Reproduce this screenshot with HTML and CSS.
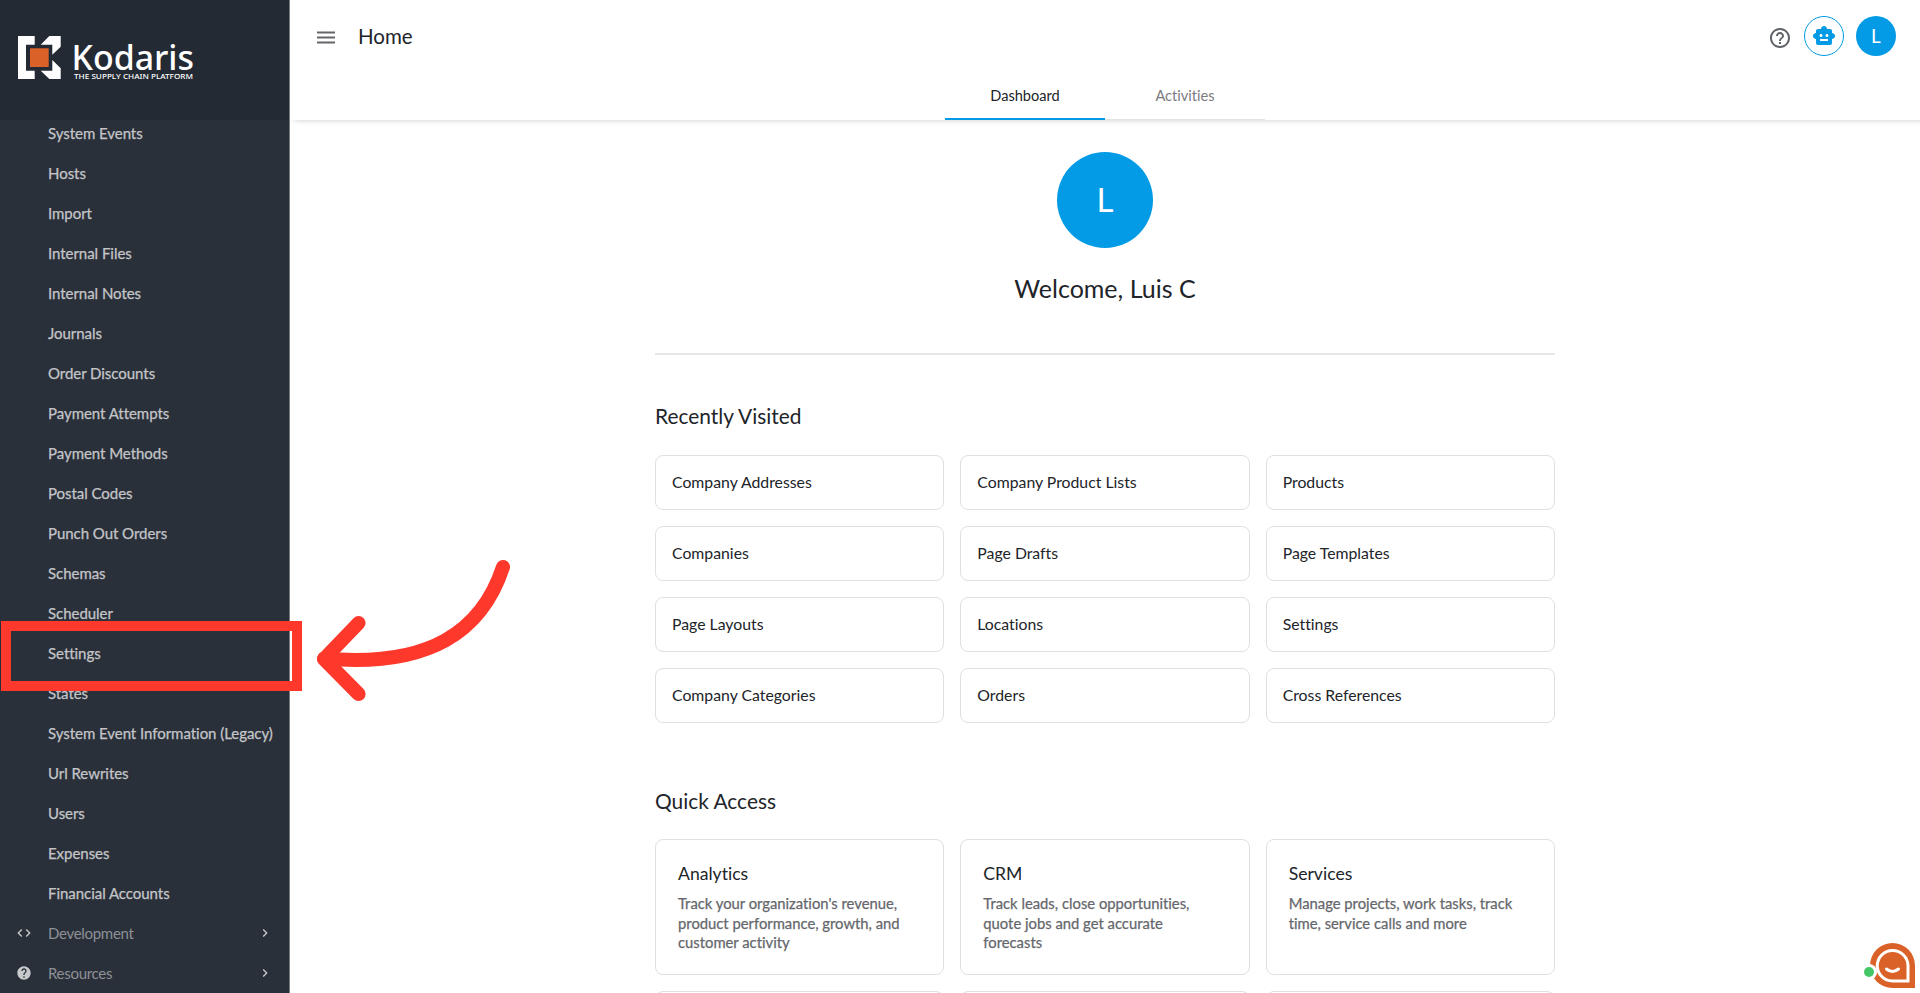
FILE: index.html
```
<!DOCTYPE html>
<html lang="en">
<head>
    <meta charset="UTF-8">
    <meta name="viewport" content="width=device-width, initial-scale=1.0">
    <title>Kodaris - Home</title>
    <link rel="stylesheet" href="styles.css">
</head>
<body>
    <div class="app">
        <!-- Sidebar -->
        <aside class="sidebar">
            <div class="sidebar-header">
                <svg class="logo" width="184" height="56" viewBox="0 0 184 56">
                    <path fill="#fff" d="M3 6h16.700v8.700H11v26h8.700V49H3z"/>
                    <path fill="#fff" d="M34.300 6h11.400v10.700l-8.400 8v-10H25.700zM25.700 40.700h11.600V30l8.400 8.300V49H34.300z"/>
                    <rect x="15" y="18.300" width="18.700" height="18.700" fill="#da6228"/>
                    <text class="logo-name" x="56.500" y="40" textLength="122.500" lengthAdjust="spacingAndGlyphs">Kodaris</text>
                    <text class="logo-tagline" x="59" y="48.500" textLength="119" lengthAdjust="spacingAndGlyphs">THE SUPPLY CHAIN PLATFORM</text>
                </svg>
            </div>
            <nav class="sidebar-nav">
                <a class="nav-item">System Events</a>
                <a class="nav-item">Hosts</a>
                <a class="nav-item">Import</a>
                <a class="nav-item">Internal Files</a>
                <a class="nav-item">Internal Notes</a>
                <a class="nav-item">Journals</a>
                <a class="nav-item">Order Discounts</a>
                <a class="nav-item">Payment Attempts</a>
                <a class="nav-item">Payment Methods</a>
                <a class="nav-item">Postal Codes</a>
                <a class="nav-item">Punch Out Orders</a>
                <a class="nav-item">Schemas</a>
                <a class="nav-item">Scheduler</a>
                <a class="nav-item">Settings</a>
                <a class="nav-item">States</a>
                <a class="nav-item">System Event Information (Legacy)</a>
                <a class="nav-item">Url Rewrites</a>
                <a class="nav-item">Users</a>
                <a class="nav-item">Expenses</a>
                <a class="nav-item">Financial Accounts</a>
                <a class="nav-item nav-group">
                    <svg class="nav-icon" viewBox="0 0 24 24"><path d="M9.4 16.6L4.8 12l4.6-4.6L8 6l-6 6 6 6 1.4-1.4zm5.2 0l4.6-4.6-4.6-4.6L16 6l6 6-6 6-1.4-1.4z"/></svg>
                    Development
                    <svg class="nav-arrow" viewBox="0 0 24 24"><path d="M10 6L8.59 7.41 13.17 12l-4.58 4.59L10 18l6-6z"/></svg>
                </a>
                <a class="nav-item nav-group">
                    <svg class="nav-icon" viewBox="0 0 24 24"><path d="M12 2C6.48 2 2 6.48 2 12s4.48 10 10 10 10-4.48 10-10S17.52 2 12 2zm1 17h-2v-2h2v2zm2.07-7.75l-.9.92C13.45 12.9 13 13.5 13 15h-2v-.5c0-1.1.45-2.1 1.17-2.83l1.24-1.26c.37-.36.59-.86.59-1.41 0-1.1-.9-2-2-2s-2 .9-2 2H8c0-2.21 1.79-4 4-4s4 1.79 4 4c0 .88-.36 1.68-.93 2.25z"/></svg>
                    Resources
                    <svg class="nav-arrow" viewBox="0 0 24 24"><path d="M10 6L8.59 7.41 13.17 12l-4.58 4.59L10 18l6-6z"/></svg>
                </a>
            </nav>
        </aside>

        <!-- Main area -->
        <div class="main">
            <header class="topbar">
                <div class="toolbar">
                    <svg class="menu-icon" width="18" height="13" viewBox="0 0 18 13"><path d="M0 .5h18v2H0zM0 5.500h18v2H0zM0 10.500h18v2H0z"/></svg>
                    <h1 class="page-title">Home</h1>
                    <div class="toolbar-actions">
                        <svg class="help-icon" viewBox="0 0 24 24"><path d="M11 18h2v-2h-2v2zm1-16C6.48 2 2 6.48 2 12s4.48 10 10 10 10-4.48 10-10S17.52 2 12 2zm0 18c-4.41 0-8-3.59-8-8s3.59-8 8-8 8 3.59 8 8-3.59 8-8 8zm0-14c-2.21 0-4 1.79-4 4h2c0-1.1.9-2 2-2s2 .9 2 2c0 2-3 1.75-3 5h2c0-2.25 3-2.5 3-5 0-2.21-1.79-4-4-4z"/></svg>
                        <div class="bot-btn">
                            <svg width="24" height="24" viewBox="0 0 24 24"><path fill-rule="evenodd" d="M20 9V7c0-1.100-.9-2-2-2h-3c0-1.660-1.340-3-3-3S9 3.340 9 5H6c-1.100 0-2 .9-2 2v2c-1.660 0-3 1.340-3 3s1.340 3 3 3v4c0 1.100.9 2 2 2h12c1.100 0 2-.9 2-2v-4c1.660 0 3-1.340 3-3s-1.340-3-3-3zM7.500 11.500c0-.83.67-1.500 1.500-1.500s1.500.67 1.500 1.500S9.830 13 9 13s-1.500-.67-1.500-1.500zM16 17H8v-2h8v2zm-1-4c-.83 0-1.500-.67-1.500-1.500S14.170 10 15 10s1.500.67 1.500 1.500S15.830 13 15 13z"/></svg>
                        </div>
                        <div class="avatar">L</div>
                    </div>
                </div>
                <div class="tabs">
                    <a class="tab active">Dashboard</a>
                    <a class="tab">Activities</a>
                </div>
            </header>

            <main class="content">
                <div class="welcome">
                    <div class="avatar avatar-large">L</div>
                    <h2 class="welcome-text">Welcome, Luis C</h2>
                </div>

                <h3 class="section-title">Recently Visited</h3>
                <div class="card-grid">
                    <a class="link-card">Company Addresses</a>
                    <a class="link-card">Company Product Lists</a>
                    <a class="link-card">Products</a>
                    <a class="link-card">Companies</a>
                    <a class="link-card">Page Drafts</a>
                    <a class="link-card">Page Templates</a>
                    <a class="link-card">Page Layouts</a>
                    <a class="link-card">Locations</a>
                    <a class="link-card">Settings</a>
                    <a class="link-card">Company Categories</a>
                    <a class="link-card">Orders</a>
                    <a class="link-card">Cross References</a>
                </div>

                <h3 class="section-title quick-title">Quick Access</h3>
                <div class="card-grid">
                    <a class="info-card">
                        <h4>Analytics</h4>
                        <p>Track your organization's revenue,<br>product performance, growth, and<br>customer activity</p>
                    </a>
                    <a class="info-card">
                        <h4>CRM</h4>
                        <p>Track leads, close opportunities,<br>quote jobs and get accurate<br>forecasts</p>
                    </a>
                    <a class="info-card">
                        <h4>Services</h4>
                        <p>Manage projects, work tasks, track<br>time, service calls and more</p>
                    </a>
                    <a class="info-card"></a>
                    <a class="info-card"></a>
                    <a class="info-card"></a>
                </div>
            </main>
        </div>
    </div>

    <!-- Settings callout -->
    <div class="callout-box"></div>
    <svg class="callout-arrow" width="204" height="154" viewBox="0 0 204 154">
        <path d="M193 16C172 80 120 117 14 107.500"/>
        <path d="M48.600 72L14 108L48.600 143"/>
    </svg>

    <!-- Chat launcher -->
    <svg class="chat-launcher" width="60" height="58" viewBox="0 0 60 58">
        <path fill="#da6228" d="M32.500 8A22.500 22.500 0 0 1 55 30.500V53H32.500a22.500 22.500 0 0 1 0-45z"/>
        <path class="chat-line" d="M32.500 15.500a15.500 15.500 0 0 1 15.500 15.500v15H32.500a15.250 15.250 0 0 1 0-30.500z"/>
        <path class="chat-line smile" d="M26.500 34q6 5 12 0"/>
        <circle cx="9" cy="37" r="8" fill="#fff"/>
        <circle cx="9" cy="37" r="5" fill="#44c767"/>
    </svg>
</body>
</html>
```
FILE: styles.css
```
* {
    margin: 0;
    padding: 0;
    box-sizing: border-box;
}

body {
    font-family: Lato, 'Open Sans', sans-serif;
    font-variant-ligatures: none;
    color: #212429;
    background: #fff;
    overflow: hidden;
}

.app {
    display: flex;
    height: 100vh;
    overflow: hidden;
}

/* Sidebar */
.sidebar {
    width: 290px;
    flex-shrink: 0;
    background: #2a303a;
    border-right: 1px solid #777a80;
    overflow: hidden;
}

.sidebar-header {
    height: 120px;
    padding: 30px 15px;
    background: #242a33;
    position: relative;
    z-index: 1;
}

.logo {
    display: block;
    overflow: visible;
}

.logo-name {
    font-family: 'Noto Sans', sans-serif;
    font-size: 35px;
    font-weight: 500;
    fill: #fff;
}

.logo-tagline {
    font-family: 'Noto Sans', sans-serif;
    font-size: 7.5px;
    font-weight: 500;
    fill: #fff;
}

.sidebar-nav {
    margin-top: -7px;
}

.nav-item {
    display: flex;
    align-items: center;
    height: 40px;
    padding-left: 48px;
    font-size: 15px;
    letter-spacing: -0.04px;
    color: #c4c5c8;
    -webkit-text-stroke: 0.25px #c4c5c8;
    white-space: nowrap;
}

.nav-group {
    padding: 0 16px;
    color: #8d9095;
    letter-spacing: -0.3px;
    -webkit-text-stroke: 0;
}

.nav-icon {
    width: 16px;
    height: 16px;
    margin-right: 16px;
    fill: #c8c9cb;
}

.nav-arrow {
    width: 16px;
    height: 16px;
    margin-left: auto;
    fill: #c8c9cb;
}

/* Top bar */
.main {
    flex: 1;
    display: flex;
    flex-direction: column;
    overflow: hidden;
}

.topbar {
    height: 120px;
    flex-shrink: 0;
    box-shadow: 4px 1px 5px rgba(0, 0, 0, 0.16);
}

.toolbar {
    display: flex;
    align-items: center;
    height: 72px;
    padding: 0 24px 0 27px;
}

.menu-icon {
    margin-top: 3px;
    fill: #66646b;
}

.page-title {
    margin: -1px 0 0 23px;
    font-size: 20.5px;
    font-weight: 400;
}

.toolbar-actions {
    display: flex;
    align-items: center;
    gap: 12px;
    margin-left: auto;
}

.help-icon {
    width: 24px;
    height: 24px;
    margin-top: 3px;
    fill: #5f6368;
}

.bot-btn {
    display: flex;
    align-items: center;
    justify-content: center;
    width: 40px;
    height: 40px;
    border: 1px solid #039be5;
    border-radius: 50%;
    fill: #039be5;
}

.avatar {
    display: flex;
    align-items: center;
    justify-content: center;
    width: 40px;
    height: 40px;
    padding-bottom: 1px;
    border-radius: 50%;
    background: #039be5;
    color: #fff;
    font-size: 19px;
}

.tabs {
    display: flex;
    justify-content: center;
    height: 48px;
}

.tab {
    display: flex;
    align-items: center;
    justify-content: center;
    width: 160px;
    border-bottom: 1px solid #e4e4e4;
    font-size: 14.6px;
    color: #7b7b7f;
}

.tab.active {
    border-bottom: 2px solid #039be5;
    color: #212429;
}

/* Content */
.content {
    width: 900px;
    margin: 0 auto;
}

.welcome {
    display: flex;
    flex-direction: column;
    align-items: center;
    height: 235px;
    padding-top: 32px;
    border-bottom: 2px solid #e6e6e6;
}

.avatar-large {
    width: 96px;
    height: 96px;
    padding-bottom: 2px;
    font-size: 33px;
}

.welcome-text {
    margin-top: 24px;
    font-size: 25px;
    line-height: 32px;
    font-weight: 400;
}

.section-title {
    margin: 47px 0 25px;
    font-size: 20.9px;
    line-height: 28px;
    font-weight: 400;
}

.quick-title {
    margin: 64px 0 24px;
}

.card-grid {
    display: grid;
    grid-template-columns: repeat(3, 1fr);
    gap: 16px;
}

.link-card {
    display: flex;
    align-items: center;
    height: 55px;
    padding: 0 16px 3px;
    border: 1px solid #e0e0e2;
    border-radius: 8px;
    font-size: 15.8px;
}

.info-card {
    height: 136px;
    padding: 22px;
    border: 1px solid #e0e0e2;
    border-radius: 8px;
}

.info-card h4 {
    font-size: 17.6px;
    line-height: 24px;
    font-weight: 400;
}

.info-card p {
    margin-top: 8px;
    font-size: 14.8px;
    line-height: 19.6px;
    color: #65676c;
    -webkit-text-stroke: 0.25px #65676c;
}

/* Callout over the Settings entry */
.callout-box {
    position: absolute;
    left: 1px;
    top: 621px;
    width: 301px;
    height: 70px;
    border: 10px solid #ff382c;
}

.callout-arrow {
    position: absolute;
    left: 310px;
    top: 551px;
    fill: none;
    stroke: #ff382c;
    stroke-width: 14;
    stroke-linecap: round;
    stroke-linejoin: round;
}

.chat-launcher {
    position: absolute;
    left: 1860px;
    top: 935px;
}

.chat-line {
    fill: none;
    stroke: #fff;
    stroke-width: 3;
}

.smile {
    stroke-linecap: round;
}
```
